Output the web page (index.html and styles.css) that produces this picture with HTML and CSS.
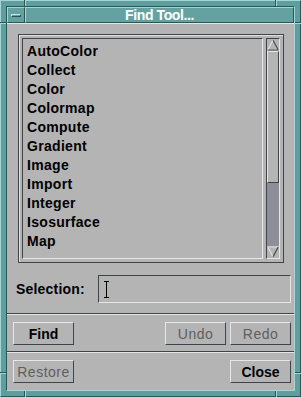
FILE: index.html
```html
<!DOCTYPE html>
<html>
<head>
    <title>Find Tool...</title>
    <link rel="stylesheet" href="styles.css">
</head>
<body>
    <div class="window">
        <span class="tick tick-v tl"></span>
        <span class="tick tick-h tl2"></span>
        <span class="tick tick-v tr"></span>
        <span class="tick tick-h tr2"></span>
        <span class="tick tick-v bl"></span>
        <span class="tick tick-h bl2"></span>
        <span class="tick tick-v br"></span>
        <span class="tick tick-h br2"></span>

        <div class="frame">
            <div class="titlebar">
                <div class="menu-btn"><span class="menu-bar"></span></div>
                <div class="title">Find Tool...</div>
            </div>

            <div class="client">
                <div class="list-frame">
                    <ul class="list">
                        <li>AutoColor</li>
                        <li>Collect</li>
                        <li>Color</li>
                        <li>Colormap</li>
                        <li>Compute</li>
                        <li>Gradient</li>
                        <li>Image</li>
                        <li>Import</li>
                        <li>Integer</li>
                        <li>Isosurface</li>
                        <li>Map</li>
                    </ul>
                    <div class="scrollbar">
                        <svg class="arrow" width="14" height="13" viewBox="0 0 14 13">
                            <polygon points="7,1 13,12 1,12" fill="#b4b4b4"/>
                            <line x1="1" y1="12" x2="7" y2="1" stroke="#e8e8e8" stroke-width="1.2"/>
                            <line x1="7" y1="1" x2="13" y2="12" stroke="#3a464c" stroke-width="1.2"/>
                            <line x1="1" y1="12.4" x2="13" y2="12.4" stroke="#3a464c" stroke-width="1"/>
                        </svg>
                        <div class="trough">
                            <div class="thumb"></div>
                        </div>
                        <svg class="arrow" width="14" height="13" viewBox="0 0 14 13">
                            <polygon points="1,1 13,1 7,12" fill="#b4b4b4"/>
                            <line x1="1" y1="0.6" x2="13" y2="0.6" stroke="#e8e8e8" stroke-width="1"/>
                            <line x1="1" y1="1" x2="7" y2="12" stroke="#e8e8e8" stroke-width="1.2"/>
                            <line x1="13" y1="1" x2="7" y2="12" stroke="#3a464c" stroke-width="1.4"/>
                        </svg>
                    </div>
                </div>

                <div class="selection">
                    <label class="sel-label">Selection:</label>
                    <div class="field">
                        <svg class="cursor" width="7" height="17" viewBox="0 0 7 17">
                            <path d="M1 0.5H6M3.5 0.5V16.5M1 16.5H6" stroke="#000" stroke-width="1" fill="none"/>
                        </svg>
                    </div>
                </div>

                <div class="sep"></div>

                <div class="buttons">
                    <button class="btn">Find</button>
                    <span class="spacer"></span>
                    <button class="btn disabled">Undo</button>
                    <button class="btn disabled">Redo</button>
                </div>

                <div class="sep sep2"></div>

                <div class="buttons">
                    <button class="btn disabled">Restore</button>
                    <span class="spacer"></span>
                    <button class="btn">Close</button>
                </div>
            </div>
        </div>
    </div>
</body>
</html>
```

FILE: styles.css
```css
body {
    margin: 0;
    font-family: "Liberation Sans", Arial, sans-serif;
    background-color: #5f9e9e;
}
.window {
    position: relative;
    box-sizing: border-box;
    width: 301px;
    height: 397px;
    padding: 5px;
    background-color: #5f9e9e;
    border-top: 1px solid #a9d4d4;
    border-left: 1px solid #a9d4d4;
    border-bottom: 1px solid #2c5656;
    border-right: 1px solid #2c5656;
}
.tick {
    position: absolute;
}
.tick-v {
    width: 1px;
    height: 6px;
    background-color: #2c5656;
    border-right: 1px solid #a9d4d4;
}
.tick-h {
    width: 6px;
    height: 1px;
    background-color: #2c5656;
    border-bottom: 1px solid #a9d4d4;
}
.tl { left: 23px; top: -1px; }
.tr { left: 274px; top: -1px; }
.bl { left: 23px; bottom: -1px; }
.br { left: 274px; bottom: -1px; }
.tl2 { left: -1px; top: 21px; }
.tr2 { right: -1px; top: 21px; }
.bl2 { left: -1px; top: 371px; }
.br2 { right: -1px; top: 371px; }

.frame {
    height: 100%;
    box-sizing: border-box;
    display: flex;
    flex-direction: column;
    border-top: 1px solid #2c5656;
    border-left: 1px solid #2c5656;
    border-bottom: 1px solid #a9d4d4;
    border-right: 1px solid #a9d4d4;
}
.titlebar {
    display: flex;
    height: 16px;
}
.menu-btn, .title {
    box-sizing: border-box;
    height: 16px;
    background-color: #64a2a2;
    border-top: 1px solid #a9d4d4;
    border-left: 1px solid #a9d4d4;
    border-bottom: 1px solid #2c5656;
    border-right: 1px solid #2c5656;
}
.menu-btn {
    width: 18px;
    display: flex;
    align-items: center;
    justify-content: center;
}
.menu-bar {
    width: 10px;
    height: 3px;
    box-sizing: border-box;
    border-top: 1px solid #c8e4e4;
    border-left: 1px solid #c8e4e4;
    border-bottom: 1px solid #2c5656;
    border-right: 1px solid #2c5656;
}
.title {
    flex: 1;
    color: #ffffff;
    font-weight: bold;
    font-size: 14px;
    letter-spacing: -0.4px;
    line-height: 14px;
    text-align: center;
}

.client {
    flex: 1;
    background-color: #b4b4b4;
    border-top: 1px solid #e6e6e6;
}
.list-frame {
    display: flex;
    margin: 10px 10px 0 11px;
    padding: 3px;
    border: 1px solid #3a464c;
    box-shadow: inset 1px 1px 0 #e0e0e0;
}
.list {
    flex: 1;
    height: 221px;
    box-sizing: border-box;
    margin: 0 3px 0 0;
    padding: 3px 0 0 4px;
    list-style: none;
    border-top: 1px solid #3a464c;
    border-left: 1px solid #3a464c;
    border-bottom: 1px solid #e6e6e6;
    border-right: 1px solid #e6e6e6;
    overflow: hidden;
}
.list li {
    font-weight: bold;
    font-size: 14px;
    letter-spacing: 0.3px;
    line-height: 19px;
    color: #000;
}
.scrollbar {
    width: 14px;
    height: 221px;
    box-sizing: border-box;
    display: flex;
    flex-direction: column;
    border-top: 1px solid #3a464c;
    border-left: 1px solid #3a464c;
    border-bottom: 1px solid #e6e6e6;
    border-right: 1px solid #e6e6e6;
    background-color: #8e8e98;
}
.arrow {
    display: block;
    width: 12px;
    height: 12px;
    background-color: #b4b4b4;
}
.trough {
    flex: 1;
}
.thumb {
    height: 132px;
    box-sizing: border-box;
    background-color: #b4b4b4;
    border-top: 1px solid #e6e6e6;
    border-left: 1px solid #e6e6e6;
    border-bottom: 1px solid #3a464c;
    border-right: 1px solid #3a464c;
}

.selection {
    display: flex;
    align-items: center;
    margin-top: 12px;
    padding: 0 3px 0 9px;
}
.sel-label {
    flex: 1;
    font-weight: bold;
    font-size: 14px;
    letter-spacing: 0.2px;
}
.field {
    width: 193px;
    height: 28px;
    box-sizing: border-box;
    display: flex;
    align-items: center;
    padding-left: 4px;
    border-top: 1px solid #3a464c;
    border-left: 1px solid #3a464c;
    border-bottom: 1px solid #e6e6e6;
    border-right: 1px solid #e6e6e6;
}
.cursor {
    display: block;
}
.sep {
    height: 1px;
    margin-top: 10px;
    background-color: #3a464c;
    border-bottom: 1px solid #e6e6e6;
}
.sep2 {
    margin-top: 6px;
}
.buttons {
    display: flex;
    gap: 4px;
    margin-top: 7px;
    padding: 0 3px 0 6px;
}
.spacer {
    flex: 1;
}
.btn {
    width: 61px;
    height: 23px;
    box-sizing: border-box;
    padding: 0;
    font-family: "Liberation Sans", Arial, sans-serif;
    font-weight: bold;
    font-size: 14px;
    color: #000;
    background-color: #b4b4b4;
    border-top: 1px solid #e6e6e6;
    border-left: 1px solid #e6e6e6;
    border-bottom: 1px solid #3a464c;
    border-right: 1px solid #3a464c;
    border-radius: 0;
}
.btn.disabled {
    font-weight: normal;
    letter-spacing: 0.5px;
    color: #5e5e5e;
}
```
